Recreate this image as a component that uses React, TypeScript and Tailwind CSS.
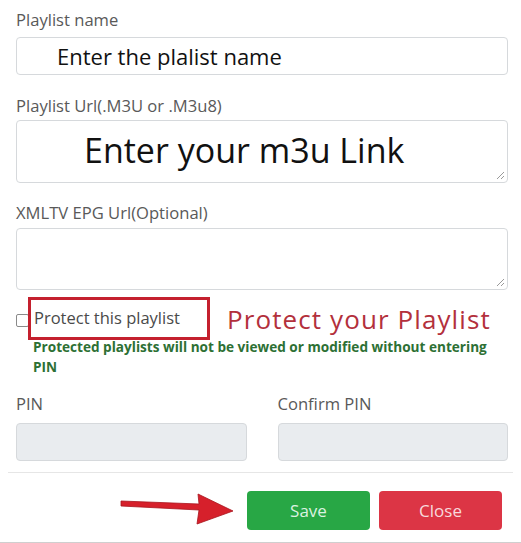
import React from 'react';

const font = { fontFamily: '"Open Sans", "Noto Sans", sans-serif' };

function Grip() {
  return (
    <svg className="absolute right-[2px] bottom-[2px]" width="9" height="9" viewBox="0 0 9 9">
      <line x1="1" y1="8" x2="8" y2="1" stroke="#9a9a9a" strokeWidth="1" />
      <line x1="5" y1="8" x2="8" y2="5" stroke="#9a9a9a" strokeWidth="1" />
    </svg>
  );
}

function Label({ children, className = '' }: { children: React.ReactNode; className?: string }) {
  return <div className={`h-6 text-[16.6px] leading-6 text-[#595959] ${className}`}>{children}</div>;
}

export default function App() {
  return (
    <div className="w-[521px] h-[543px] overflow-hidden bg-white" style={font}>
      <div className="pt-2 pl-4 pr-[13px] flex flex-col">
        <Label>Playlist name</Label>
        <div className="mt-[5px] h-[38px] rounded-[4px] border border-[#d6d9dc] flex items-center pl-[40px] text-[22px] text-[#111]">
          Enter the plalist name
        </div>

        <Label className="mt-[19px]">Playlist Url(.M3U or .M3u8)</Label>
        <div className="relative mt-[2px] h-[63px] rounded-[4px] border border-[#d6d9dc] flex items-center pl-[67px] pb-[2px] text-[34px] text-[#111]">
          Enter your m3u Link
          <Grip />
        </div>

        <Label className="mt-[18px]">XMLTV EPG Url(Optional)</Label>
        <div className="relative mt-[3px] h-[62px] rounded-[4px] border border-[#d6d9dc]">
          <Grip />
        </div>

        <div className="mt-[7px] h-[43px] flex items-center">
          <span className="w-[13px] h-[13px] mt-[3px] border border-[#8a8a8a] rounded-[2px] bg-white shrink-0" />
          <div className="-ml-px h-[43px] w-[182px] border-[3px] border-[#c4202e] flex items-center pl-[3px] text-[16.5px] text-[#4a4a4a]">
            Protect this playlist
          </div>
          <span className="ml-[17px] text-[26px] tracking-[1.1px] text-[#b3303c] leading-none">Protect your Playlist</span>
        </div>

        <div className="-mt-[3px] pl-[17px] text-[13.6px] leading-5 font-bold text-[#2d7034]">
          Protected playlists will not be viewed or modified without entering
          <br />
          PIN
        </div>

        <div className="mt-[15px] grid grid-cols-2 gap-x-[31px]">
          <Label>PIN</Label>
          <Label>Confirm PIN</Label>
          <div className="mt-[7px] h-[38px] rounded-[4px] border border-[#d6d9dc] bg-[#e9ecef]" />
          <div className="mt-[7px] h-[38px] rounded-[4px] border border-[#d6d9dc] bg-[#e9ecef]" />
        </div>

        <div className="mt-[11px] -ml-2 -mr-[5px] h-px bg-[#e6e6e6]" />

        <div className="mt-[18px] flex items-start h-[39px]">
          <svg className="ml-[104px] shrink-0" width="116" height="39" viewBox="0 0 116 39">
            <polygon
              points="1,10 79,13 78,3 113,20 77,33 79,19 1,15"
              fill="#d6202b"
              stroke="#a8141d"
              strokeWidth="0.8"
              strokeLinejoin="round"
            />
          </svg>
          <button className="ml-[11px] w-[123px] h-[39px] rounded-[4px] bg-[#28a745] text-[17px] text-[#dcf2e0]">
            Save
          </button>
          <button className="ml-[9px] w-[123px] h-[39px] rounded-[4px] bg-[#dc3545] text-[17px] text-[#f8d9dc]">
            Close
          </button>
        </div>

        <div className="mt-[12px] -ml-4 -mr-[13px] h-px bg-[#cfcfcf]" />
      </div>
    </div>
  );
}
